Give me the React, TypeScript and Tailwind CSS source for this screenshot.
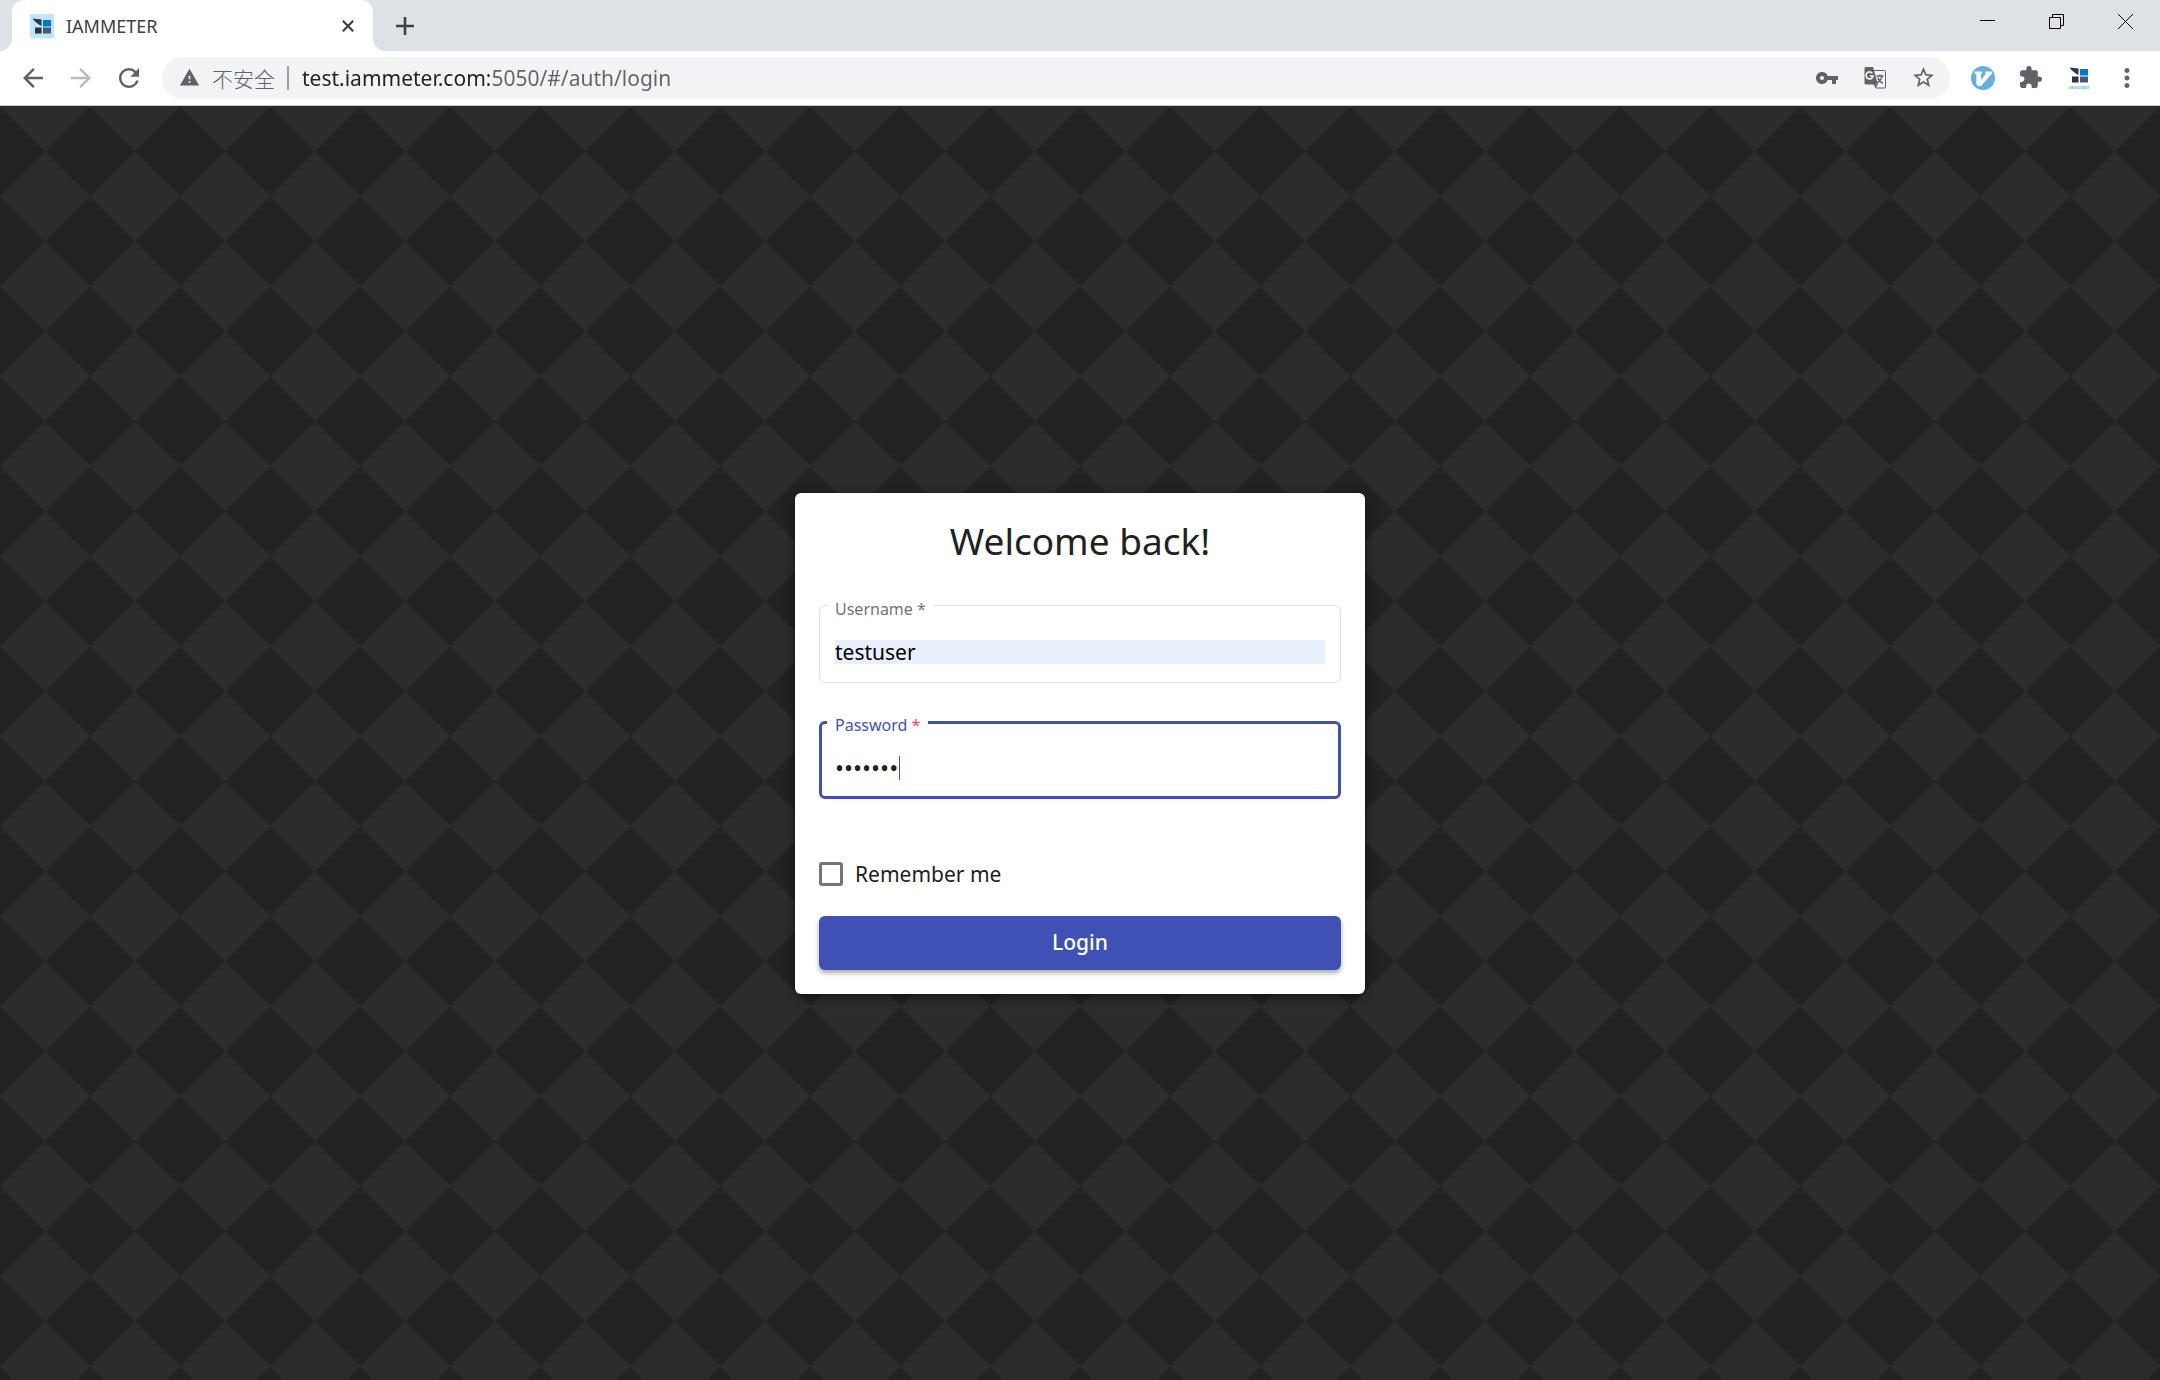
import { useState } from "react";
import {
  MdArrowBack,
  MdArrowForward,
  MdExtension,
  MdMoreVert,
  MdRefresh,
  MdStarBorder,
  MdVpnKey,
  MdWarning,
} from "react-icons/md";

const LogoMark = () => (
  <>
    <path d="M2.5 4.5 L11.5 5.5 V12 C8.500 10.500 5 8 2.500 4.500Z" fill="#26345a" />
    <rect x="13" y="6" width="8" height="6.500" fill="#0078c8" />
    <rect x="5" y="13.500" width="6.500" height="6" fill="#303438" />
    <rect x="13" y="13.500" width="8" height="6" fill="#4a5878" />
  </>
);

const TabStrip = () => (
  <div className="flex h-[51px] items-start bg-[#dee1e6] text-[#3c4043]">
    <div className="relative ml-3 flex h-[51px] w-[361px] items-center rounded-t-xl bg-white pl-[18px] pr-[13px]">
      {/* rounded feet of the active tab */}
      <span className="absolute -left-3 bottom-0 size-3 bg-[radial-gradient(circle_at_0_0,transparent_12px,white_12px)]" />
      <span className="absolute -right-3 bottom-0 size-3 bg-[radial-gradient(circle_at_100%_0,transparent_12px,white_12px)]" />
      <svg className="size-6" viewBox="0 0 24 24">
        <rect width="24" height="24" fill="#bfe6ff" />
        <LogoMark />
      </svg>
      <span className="ml-3 flex-1 text-lg">IAMMETER</span>
      <button aria-label="Close tab" className="flex size-6 items-center justify-center">
        <svg className="size-3" viewBox="0 0 12 12" stroke="currentColor" strokeWidth="2.2">
          <path d="M0.800 0.800 L11.200 11.200 M11.200 0.800 L0.800 11.200" />
        </svg>
      </button>
    </div>
    <button aria-label="New tab" className="ml-[18px] flex h-[51px] w-7 items-center justify-center">
      <svg className="size-[18px]" viewBox="0 0 18 18" stroke="currentColor" strokeWidth="2.600">
        <path d="M9 0 V18 M0 9 H18" />
      </svg>
    </button>
    <div className="ml-auto flex h-[43px] text-black">
      <button aria-label="Minimize" className="flex w-[69px] items-center justify-center">
        <svg className="size-[15px]" viewBox="0 0 15 15" stroke="currentColor">
          <path d="M0 6.500 H15" />
        </svg>
      </button>
      <button aria-label="Restore" className="flex w-[69px] items-center justify-center">
        <svg className="size-[15px]" viewBox="0 0 15 15" fill="none" stroke="currentColor">
          <path d="M0.500 3.500 H11.500 V14.500 H0.500Z M3.500 3.500 V0.500 H14.500 V11.500 H11.500" />
        </svg>
      </button>
      <button aria-label="Close window" className="flex w-[69px] items-center justify-center">
        <svg className="size-[15px]" viewBox="0 0 15 15" stroke="currentColor">
          <path d="M0 0 L15 15 M15 0 L0 15" />
        </svg>
      </button>
    </div>
  </div>
);

const TranslateIcon = () => (
  <svg className="size-6" viewBox="0 0 24 24">
    <path d="M10 4.500 H21.500 Q22.500 4.500 22.500 5.500 V21 Q22.500 22 21.500 22 H13 L11 18" fill="none" stroke="#5f6368" />
    <path d="M3 1 H10 L15 18.500 H3 Q1.500 18.500 1.500 17 V2.500 Q1.500 1 3 1Z" fill="#5f6368" />
    <path d="M11.500 18.500 H15 L12.500 22Z" fill="#5f6368" />
    <path d="M9.300 7.300 A3.500 3.500 0 1 0 10 10 H6.800" fill="none" stroke="#f1f3f4" strokeWidth="1.700" />
    <path d="M13.500 10 H20.500 M17 8.500 V10 M19.200 10 C18.500 13 16.500 15.500 14.500 17 M14.800 11.500 C15.500 14 17.500 16 20 17.500" fill="none" stroke="#5f6368" strokeWidth="1.300" />
  </svg>
);

const Toolbar = () => {
  const [url, setUrl] = useState("test.iammeter.com:5050/#/auth/login");

  return (
    <div className="flex h-[55px] items-center border-b border-[#c9cccf] bg-white pb-px text-[#5f6368]">
      <button aria-label="Back" className="ml-[18px]">
        <MdArrowBack size={30} />
      </button>
      <button aria-label="Forward" className="ml-[18px] text-[#babcbe]">
        <MdArrowForward size={30} />
      </button>
      <button aria-label="Reload" className="ml-[18px]">
        <MdRefresh size={30} />
      </button>
      <div className="ml-[18px] flex h-[42px] flex-1 items-center rounded-full bg-[#f1f3f4] pl-[17px] pr-[14px]">
        <MdWarning size={21} />
        <span className="ml-3 font-['Noto_Sans_CJK_SC',sans-serif] text-[21px] font-light leading-6">不安全</span>
        <span className="ml-3 h-6 w-0.5 bg-[#9aa0a6]" />
        <input
          aria-label="Address"
          value={url}
          onChange={(e) => setUrl(e.target.value)}
          className="ml-[13px] min-w-0 flex-1 bg-[linear-gradient(90deg,#202124_187px,#5f6368_187px)] bg-clip-text text-[21px] leading-7 caret-black outline-none [-webkit-text-fill-color:transparent]"
        />
        <button aria-label="Saved passwords">
          <MdVpnKey size={24} />
        </button>
        <button aria-label="Translate" className="ml-6">
          <TranslateIcon />
        </button>
        <button aria-label="Bookmark" className="ml-6">
          <MdStarBorder size={25} />
        </button>
      </div>
      <div className="ml-[21px] mr-[18px] flex items-center">
        <button aria-label="Vimium">
          <svg className="size-6" viewBox="0 0 24 24">
            <circle cx="12" cy="12" r="12" fill="#62b0e4" />
            <path d="M3.500 5.500 H11 V7.500 L10 8 V14 L15 7.500 L14 7 V5.500 H21 V7.500 L10 20 H7 L5.300 18 V8 L3.500 7.500Z" fill="#fff" />
          </svg>
        </button>
        <button aria-label="Extensions" className="ml-[23px]">
          <MdExtension size={25} />
        </button>
        <button aria-label="DeviceBit" className="ml-6">
          <svg className="size-6" viewBox="0 0 24 24">
            <g transform="translate(0 -3)">
              <LogoMark />
            </g>
            <text x="12" y="22.500" fontSize="4" fontWeight="700" textAnchor="middle" fill="#5cbce8">DEVICEBIT</text>
          </svg>
        </button>
        <button aria-label="Menu" className="ml-[21px]">
          <MdMoreVert size={30} />
        </button>
      </div>
    </div>
  );
};

const LoginForm = () => {
  const [username, setUsername] = useState("testuser");
  const [password, setPassword] = useState("testing");
  const [remember, setRemember] = useState(false);

  return (
    <form
      onSubmit={(e) => e.preventDefault()}
      className="flex w-full max-w-[570px] flex-col rounded-md bg-white p-6 text-[21px] text-[#212121] shadow-[0_3px_12px_rgba(0,0,0,0.5)]"
    >
      <h1 className="text-center text-[37px] leading-12">Welcome back!</h1>

      <div className="relative mt-10 flex h-[78px] items-center rounded-md border border-[#e0e0e0] px-[15px] pt-4">
        <label htmlFor="username" className="absolute -top-[9px] left-[7px] bg-white px-2 text-base leading-6 text-[#757575]">
          Username *
        </label>
        <input
          id="username"
          value={username}
          onChange={(e) => setUsername(e.target.value)}
          className="h-6 w-full bg-[#e8f0fe] leading-6 text-black outline-none"
        />
      </div>

      <div className="relative mt-[38px] flex h-[78px] items-center rounded-md border-3 border-[#3f51b5] px-[13px] pt-4">
        <label htmlFor="password" className="absolute -top-[11px] left-[5px] bg-white px-2 text-base leading-6 text-[#3f51b5]">
          Password <span className="text-[#ff4081]">*</span>
        </label>
        <input
          id="password"
          type="password"
          value={password}
          onChange={(e) => setPassword(e.target.value)}
          className="h-6 w-full text-2xl leading-6 caret-transparent outline-none"
        />
        <span className="absolute left-[77px] h-6 w-px bg-[#3f51b5]" />
      </div>

      <label className="mt-[59px] flex items-center gap-3 leading-8">
        <input
          type="checkbox"
          checked={remember}
          onChange={(e) => setRemember(e.target.checked)}
          className="size-6 appearance-none rounded-[3px] border-3 border-[#757575] checked:bg-[#3f51b5]"
        />
        Remember me
      </label>

      <button
        type="submit"
        className="mt-[26px] h-[54px] rounded-md bg-[#3f51b5] font-medium text-white shadow-[0_3px_5px_rgba(0,0,0,0.35)]"
      >
        Login
      </button>
    </form>
  );
};

export default function App() {
  return (
    <div className="flex min-h-screen flex-col font-['Noto_Sans','Noto_Sans_CJK_SC',sans-serif]">
      <header>
        <TabStrip />
        <Toolbar />
      </header>
      <main className="flex flex-1 items-center justify-center bg-[repeating-conic-gradient(from_-45deg,#2c2c2c_0_25%,#222_0_50%)] bg-[length:90px_90px] bg-[position:0_0] p-6">
        <LoginForm />
      </main>
    </div>
  );
}
